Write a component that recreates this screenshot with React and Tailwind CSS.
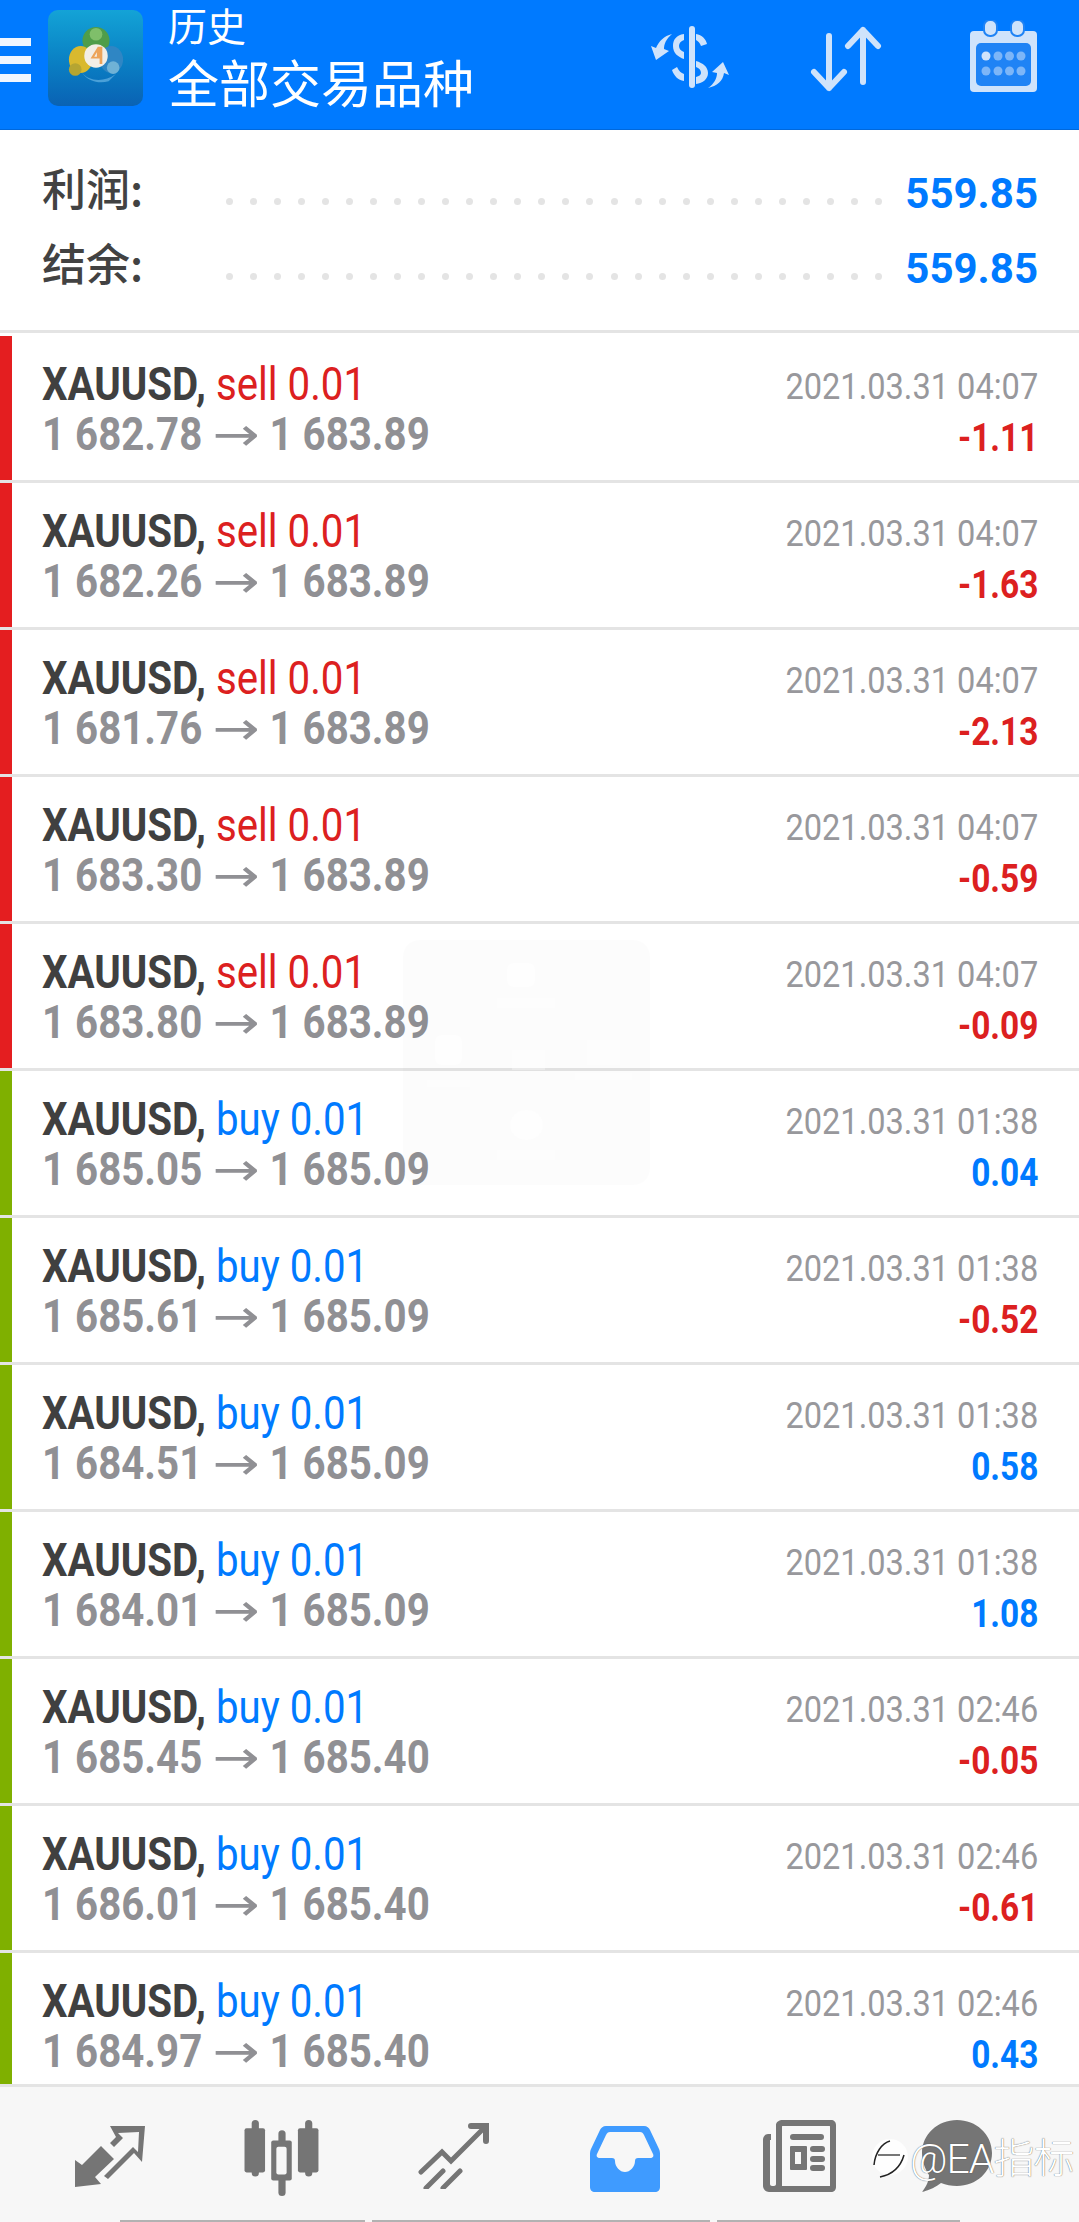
import React from 'react';

const trades = [
  { side: 'sell', open: '1 682.78', close: '1 683.89', time: '2021.03.31 04:07', profit: '-1.11' },
  { side: 'sell', open: '1 682.26', close: '1 683.89', time: '2021.03.31 04:07', profit: '-1.63' },
  { side: 'sell', open: '1 681.76', close: '1 683.89', time: '2021.03.31 04:07', profit: '-2.13' },
  { side: 'sell', open: '1 683.30', close: '1 683.89', time: '2021.03.31 04:07', profit: '-0.59' },
  { side: 'sell', open: '1 683.80', close: '1 683.89', time: '2021.03.31 04:07', profit: '-0.09' },
  { side: 'buy', open: '1 685.05', close: '1 685.09', time: '2021.03.31 01:38', profit: '0.04' },
  { side: 'buy', open: '1 685.61', close: '1 685.09', time: '2021.03.31 01:38', profit: '-0.52' },
  { side: 'buy', open: '1 684.51', close: '1 685.09', time: '2021.03.31 01:38', profit: '0.58' },
  { side: 'buy', open: '1 684.01', close: '1 685.09', time: '2021.03.31 01:38', profit: '1.08' },
  { side: 'buy', open: '1 685.45', close: '1 685.40', time: '2021.03.31 02:46', profit: '-0.05' },
  { side: 'buy', open: '1 686.01', close: '1 685.40', time: '2021.03.31 02:46', profit: '-0.61' },
  { side: 'buy', open: '1 684.97', close: '1 685.40', time: '2021.03.31 02:46', profit: '0.43' },
];

const Logo = () => (
  <div className="w-[95px] h-[96px] rounded-[10px] bg-gradient-to-b from-[#14a3d6] to-[#0a62b4] flex items-center justify-center">
    <svg width="60" height="56" viewBox="0 0 60 62" className="mb-[6px]">
      <ellipse cx="30" cy="15" rx="15" ry="15" fill="#4f9d4a" />
      <circle cx="30" cy="8" r="7" fill="#7fbf6a" />
      <ellipse cx="13" cy="36" rx="13" ry="15" fill="#d9b92e" />
      <circle cx="7" cy="47" r="7" fill="#b5a532" />
      <ellipse cx="47" cy="36" rx="13" ry="15" fill="#2f86c4" />
      <circle cx="49" cy="45" r="7" fill="#6fb2d6" />
      <path d="M14 50c8 10 24 12 38 2l-8 8c-10 3-22 1-30-10z" fill="#4aa0d8" />
      <circle cx="30" cy="32" r="13" fill="#f2eee6" />
      <path d="M32 22l-8 13h10v6h3V22zm-1 6v5h-3z" fill="#eda45a" />
    </svg>
  </div>
);

const DollarIcon = () => (
  <svg width="78" height="62" viewBox="0 0 78 62" fill="#cfe3fb">
    <rect x="38" y="0" width="6" height="62" rx="3" />
    <path d="M33 8C25 9 22 14 22 20C22 27 27 31 33 33V26C30 25 28 23 28 20C28 17 30 15 33 14Z" />
    <path d="M45 8C51 9 55 13 56 18L50 20C49 17 47 15 45 14Z" />
    <path d="M45 35C52 37 57 41 57 47C57 53 52 57 45 58V51C48 50 50 49 50 47C50 44 48 42 45 41Z" />
    <path d="M33 55C27 54 23 50 21 44L26 41C28 45 30 47 33 48Z" />
    <path d="M21 8C15 13 13 18 13 23L18 25L5 34L0 20L5 22C8 15 13 10 21 8Z" />
    <path d="M57 62C63 58 66 52 66 47L61 46L72 36L78 49L73 47C72 55 66 60 57 62Z" />
  </svg>
);

const SortIcon = () => (
  <svg width="72" height="66" viewBox="0 0 72 66" fill="none" stroke="#cfe3fb" strokeWidth="6" strokeLinecap="round" strokeLinejoin="round">
    <path d="M19 10v52M4 46l15 16 15-16" />
    <path d="M53 56V4M38 20L53 4l15 16" />
  </svg>
);

const CalendarIcon = () => (
  <svg width="69" height="72" viewBox="0 0 67 72">
    <rect x="0" y="11" width="67" height="61" rx="4" fill="#cfe3fb" />
    <rect x="6" y="23" width="55" height="43" rx="5" fill="#1f83f5" />
    <rect x="14" y="0" width="13" height="16" rx="6" fill="#cfe3fb" stroke="#1f83f5" strokeWidth="2" />
    <rect x="41" y="0" width="13" height="16" rx="6" fill="#cfe3fb" stroke="#1f83f5" strokeWidth="2" />
    <circle cx="16" cy="36" r="4.5" fill="#cfe3fb" />
    {[28, 39.5, 51].map((x) => <circle key={x} cx={x} cy="36" r="4.5" fill="#7db6f8" />)}
    {[16, 28, 39.5, 51].map((x) => <circle key={x} cx={x} cy="51" r="4.5" fill="#7db6f8" />)}
  </svg>
);

const TradeIcon = () => (
  <svg width="70" height="63" viewBox="0 0 70 63" fill="#757575">
    <path d="M0 35v27l26-3-6-7 19-18-13-13-19 19z" />
    <path d="M35 1l35 0-3 36-8-9-26 26-4-3 29-29 5 5 1-20-21 1 5 5-9 9-4-4 6-6z" />
  </svg>
);

const CandleIcon = () => (
  <svg width="76" height="76" viewBox="0 0 73 74" fill="#757575">
    <rect x="7" y="0" width="7" height="55" rx="3.5" />
    <rect x="0" y="8" width="20" height="43" rx="2" />
    <rect x="59" y="0" width="7" height="55" rx="3.5" />
    <rect x="52" y="8" width="20" height="43" rx="2" />
    <rect x="33" y="10" width="7" height="64" rx="3.5" />
    <rect x="26" y="20" width="20" height="39" rx="2" />
    <rect x="31" y="26" width="10" height="27" rx="2" fill="#f7f7f7" />
  </svg>
);

const ChartIcon = () => (
  <svg width="71" height="66" viewBox="0 0 71 66" fill="none" stroke="#757575" strokeWidth="5" strokeLinecap="round">
    <path d="M3 49L24 29 33 38 67 4" />
    <path d="M53 3h15v15" strokeWidth="6" />
    <path d="M8 65L25 48" />
    <path d="M25 65L42 48" />
  </svg>
);

const InboxIcon = () => (
  <svg width="70" height="66" viewBox="0 0 70 66">
    <path d="M16 0h38c3 0 5 2 6 4l9 19c1 2 1 4 1 6v32c0 3-2 5-5 5H5c-3 0-5-2-5-5V29c0-2 0-4 1-6l9-19c1-2 3-4 6-4z" fill="#3f9bff" />
    <path d="M20 6h30c2 0 3 1 4 3l9 19c1 2 0 4-3 4H48c-2 0-3 1-3 3 0 6-5 11-10 11s-10-5-10-11c0-2-1-3-3-3H10c-3 0-4-2-3-4l9-19c1-2 2-3 4-3z" fill="#f7f7f7" />
  </svg>
);

const NewsIcon = () => (
  <svg width="73" height="72" viewBox="0 0 73 72">
    <path d="M20 0h48c3 0 5 2 5 5v62c0 3-2 5-5 5H6c-3 0-6-3-6-6V20c0-3 2-6 5-6h3v6H7v44c0 1 1 2 2 2h2c1 0 2-1 2-2V5c0-3 3-5 7-5z" fill="#757575" />
    <path d="M20 6h46c1 0 1 0 1 1v58c0 1 0 1-1 1H19V7c0-1 0-1 1-1z" fill="#f7f7f7" />
    <rect x="27" y="14" width="34" height="6" rx="3" fill="#757575" />
    <rect x="27" y="26" width="17" height="24" rx="1" fill="#757575" />
    <rect x="32" y="32" width="6" height="12" fill="#f7f7f7" />
    <rect x="47" y="26" width="15" height="6" rx="3" fill="#757575" />
    <rect x="47" y="36" width="15" height="6" rx="3" fill="#757575" />
    <rect x="47" y="45" width="15" height="6" rx="3" fill="#757575" />
  </svg>
);

const ChatIcon = () => (
  <svg width="70" height="72" viewBox="0 0 70 72" fill="#757575">
    <path d="M35 0c19 0 35 14 35 33S54 66 35 66c-6 0-11-1-16-3C14 67 8 70 0 72c4-5 7-11 7-17C3 49 0 41 0 33 0 14 16 0 35 0z" />
  </svg>
);

const DotLeader = () => (
  <div className="absolute left-[184px] right-[156px] top-[42px] flex justify-between">
    {Array.from({ length: 28 }, (_, i) => (
      <span key={i} className="w-[7px] h-[7px] rounded-full bg-[#e4e4e4]" />
    ))}
  </div>
);

const SummaryRow = ({ label, value }) => (
  <div className="relative h-[75px] flex items-center justify-between">
    <span className="text-[44px] leading-none font-medium text-[#424242] -mt-[13px] [font-family:'Noto_Sans_CJK_SC',sans-serif]">{label}</span>
    <DotLeader />
    <span className="text-[42px] leading-none font-bold text-[#007aff]">{value}</span>
  </div>
);

const Condensed = ({ children, className }) => (
  <span className={`inline-block origin-left whitespace-pre scale-x-[0.875] ${className}`}>{children}</span>
);

const TradeRow = ({ trade }) => {
  const isSell = trade.side === 'sell';
  const loss = trade.profit.startsWith('-');
  return (
    <div className="flex h-[147px] shrink-0 border-b-[3px] border-[#e4e4e4]">
      <div className={`w-[12px] ${isSell ? 'bg-[#e41e20]' : 'bg-[#7fb000]'}`} />
      <div className="flex-1 pl-[30px] pr-[41px] pt-[23px] flex justify-between">
        <div className="flex flex-col">
          <div className="h-[50px] text-[46px] leading-[50px]">
            <Condensed className="font-bold text-[#404040]">
              XAUUSD, <span className={`font-normal ${isSell ? 'text-[#dc2020]' : 'text-[#007aff]'}`}>{trade.side} 0.01</span>
            </Condensed>
          </div>
          <div className="h-[50px] text-[46px] leading-[50px] font-bold text-[#909094]">
            <Condensed>{trade.open} <span className="inline-block w-[54px] origin-left scale-x-[1.4] font-normal leading-none [font-family:'DejaVu_Sans',sans-serif]">→</span> {trade.close}</Condensed>
          </div>
        </div>
        <div className="flex flex-col items-end pt-[3px]">
          <div className="h-[51px] text-[37px] leading-[50px] text-[#98989c]">
            <span className="inline-block origin-right whitespace-pre scale-x-[0.88]">{trade.time}</span>
          </div>
          <div className={`h-[50px] text-[38px] leading-[50px] font-bold ${loss ? 'text-[#dc2020]' : 'text-[#007aff]'}`}>
            <span className="inline-block origin-right whitespace-pre scale-x-[0.88]">{trade.profit}</span>
          </div>
        </div>
      </div>
    </div>
  );
};

export default function App() {
  return (
    <div className="relative w-[1079px] h-[2222px] overflow-hidden flex flex-col bg-white [font-family:Roboto,'Noto_Sans_CJK_SC',sans-serif]">
      {/* Header */}
      <header className="h-[130px] shrink-0 bg-[#007aff] border-b border-[#0068dc] flex items-start">
        <div className="w-[31px] mt-[38px] flex flex-col gap-[10px]">
          <span className="h-[8px] bg-[#f0f6ff]" />
          <span className="h-[8px] bg-[#f0f6ff]" />
          <span className="h-[8px] bg-[#f0f6ff]" />
        </div>
        <div className="ml-[17px] mt-[10px]"><Logo /></div>
        <div className="ml-[25px] text-white [font-family:'Noto_Sans_CJK_SC',sans-serif]">
          <div className="text-[39px] leading-[48px]">历史</div>
          <div className="text-[51px] leading-[60px] mt-[3px]">全部交易品种</div>
        </div>
        <div className="ml-auto mr-[41px] mt-[20px] flex items-start">
          <div className="mt-[6px]"><DollarIcon /></div>
          <div className="ml-[81px] mt-[6px]"><SortIcon /></div>
          <div className="ml-[87px]"><CalendarIcon /></div>
        </div>
      </header>

      {/* Summary */}
      <section className="h-[203px] shrink-0 border-b-[3px] border-[#e4e4e4] pl-[42px] pr-[41px] pt-[26px]">
        <SummaryRow label="利润:" value="559.85" />
        <SummaryRow label="结余:" value="559.85" />
      </section>

      {/* Deals */}
      <main className="flex-1 overflow-hidden flex flex-col relative pt-[3px]">
        {trades.map((t, i) => <TradeRow key={i} trade={t} />)}
        {/* faint app watermark over the list */}
        <div className="absolute left-[403px] top-[607px] w-[247px] h-[245px] rounded-[16px] bg-black/[0.012]">
          <span className="absolute left-[104px] top-[23px] w-[28px] h-[24px] rounded-[6px] bg-white/50" />
          <span className="absolute left-[94px] top-[58px] w-[58px] h-[10px] bg-white/30" />
          <span className="absolute left-[32px] top-[95px] w-[27px] h-[30px] rounded-[6px] bg-white/50" />
          <span className="absolute left-[24px] top-[140px] w-[43px] h-[7px] bg-white/30" />
          <span className="absolute left-[109px] top-[110px] w-[33px] h-[20px] bg-white/30" />
          <span className="absolute left-[184px] top-[100px] w-[33px] h-[25px] bg-white/30" />
          <span className="absolute left-[172px] top-[133px] w-[57px] h-[7px] bg-white/30" />
          <span className="absolute left-[107px] top-[170px] w-[33px] h-[30px] rounded-full bg-white/50" />
          <span className="absolute left-[94px] top-[210px] w-[58px] h-[10px] bg-white/30" />
        </div>
      </main>

      {/* Bottom tabs */}
      <nav className="h-[138px] shrink-0 bg-[#f7f7f7] border-t-[3px] border-[#e4e4e4] relative">
        <div className="h-[135px] pt-[33px] flex items-start pl-[75px]">
          <div className="mt-[5px]"><TradeIcon /></div>
          <div className="ml-[99px]"><CandleIcon /></div>
          <div className="ml-[98px] mt-[3px]"><ChartIcon /></div>
          <div className="ml-[101px] mt-[6px]"><InboxIcon /></div>
          <div className="ml-[103px]"><NewsIcon /></div>
          <div className="ml-[86px]"><ChatIcon /></div>
        </div>
        <div className="absolute bottom-0 left-[120px] flex gap-[7px]">
          <span className="w-[245px] h-[2px] bg-[#b2b2b2]" />
          <span className="w-[338px] h-[2px] bg-[#b2b2b2]" />
          <span className="w-[243px] h-[2px] bg-[#b2b2b2]" />
        </div>
        {/* Weibo watermark */}
        <div className="absolute left-[872px] top-[50px] flex items-center text-white text-[41px] leading-none tracking-[-1px] font-light [text-shadow:0_0_1px_#333]">
          <svg width="36" height="44" viewBox="0 0 36 44" fill="none" strokeWidth="1.5" className="mr-[2px]">
            <circle cx="18" cy="20" r="18" fill="#fff" opacity="0.8" />
            <path d="M2 28C3 16 10 6 18 4" stroke="#222" />
            <path d="M8 40c10-2 20-8 24-22" stroke="#222" />
            <path d="M6 18h22" stroke="#777" strokeWidth="2" />
          </svg>
          <span>@EA指标</span>
        </div>
      </nav>
    </div>
  );
}
